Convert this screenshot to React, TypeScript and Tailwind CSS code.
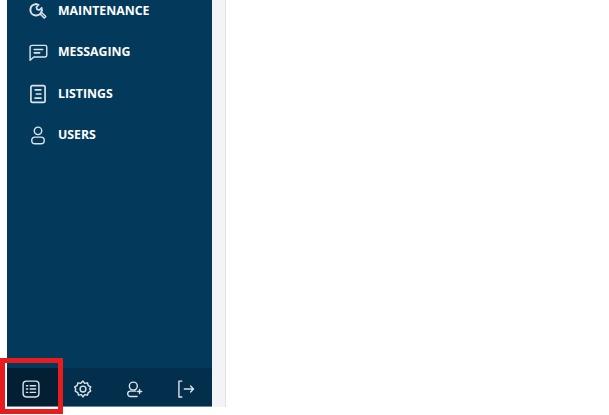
const font = { fontFamily: '"Open Sans", sans-serif' };

function Icon({ children, size = 20 }: { children: React.ReactNode; size?: number }) {
  return (
    <svg width={size} height={size} viewBox="0 0 24 24" fill="none" stroke="#dbe4ea" strokeWidth="1.7" strokeLinecap="round" strokeLinejoin="round" className="shrink-0">
      {children}
    </svg>
  );
}

const items = [
  {
    label: 'MAINTENANCE',
    icon: (
      <>
        <path d="M9.500 3.800A6.800 6.800 0 1 0 16.400 11.500" strokeWidth="2.400" />
        <path d="M9.500 3.800L12.800 4.500 10 7.500l.9 2.600 2.700.7 2.800-2.700.3 3" strokeWidth="2" />
        <path d="M14.500 15.500l5 5 1.800-1.800-5-5" strokeWidth="1.800" />
      </>
    ),
  },
  {
    label: 'MESSAGING',
    icon: (
      <>
        <path d="M5 4h15.500a2 2 0 0 1 2 2v10a2 2 0 0 1-2 2H7L2.500 22V6.500A2.500 2.500 0 0 1 5 4z" />
        <path d="M7.500 9h10M7.500 13h6.500" strokeWidth="2" />
      </>
    ),
  },
  {
    label: 'LISTINGS',
    icon: (
      <>
        <rect x="3.500" y="2" width="17" height="20" rx="2" strokeWidth="2" />
        <path d="M8.500 7h7M10 12h5.500M8.500 17h7" strokeWidth="2" />
      </>
    ),
  },
  {
    label: 'USERS',
    icon: (
      <>
        <circle cx="12" cy="7" r="4.500" />
        <rect x="4.500" y="14.500" width="15" height="8" rx="4" />
      </>
    ),
  },
];

export default function App() {
  return (
    <div className="relative h-[415px] w-[609px] overflow-hidden bg-white" style={font}>
      <div className="flex h-[407px]">
        <aside className="ml-[7px] flex w-[205px] flex-col overflow-hidden bg-[#033a5c]">
          <nav className="-mt-[10px] flex flex-1 flex-col">
            {items.map((item) => (
              <div key={item.label} className="flex h-[41.500px] items-center gap-[10px] pl-[21px]">
                <Icon>{item.icon}</Icon>
                <span className="text-[12.300px] font-bold text-white">{item.label}</span>
              </div>
            ))}
          </nav>
          <div className="flex h-[39px] border-b border-[#6d8797] bg-[#032f4c] pt-[3px]">
            <div className="-mt-[3px] flex w-[55px] items-center bg-[#021f33] pl-[14px] pt-[3px]">
              <Icon>
                <rect x="2.500" y="2.500" width="19" height="19" rx="4" />
                <path d="M6.500 8h1.500M11 8h6.500M6.500 12h1.500M11 12h6.500M6.500 16h1.500M11 16h6.500" />
              </Icon>
            </div>
            <div className="flex items-center gap-[31.500px] pl-[11px]">
              <Icon>
                <path d="M12 2.500l2 2.700 3.300-.6 1 3.200 3 1.600-1.300 2.600 1.300 2.600-3 1.600-1 3.200-3.300-.6-2 2.700-2-2.700-3.300.6-1-3.200-3-1.600L3.300 12 2 9.400l3-1.600 1-3.200 3.300.6z" />
                <circle cx="12" cy="12" r="3.500" />
              </Icon>
              <Icon>
                <circle cx="10" cy="8.500" r="4.800" />
                <path d="M13 14.500H6.500a3.200 3.200 0 0 0 0 6.500h8M17.500 12.500v5M15 15h5" />
              </Icon>
              <Icon>
                <path d="M7 2.500H3.500v19H7M10 12h11M17.500 8.500L21 12l-3.500 3.500" />
              </Icon>
            </div>
          </div>
        </aside>
        <div className="w-[14px] border-r border-[#dfe1e6] bg-[#f3f4f8]" />
        <main className="flex-1 bg-white" />
      </div>
      <div className="absolute left-0 top-[358px] h-[56px] w-[63px] border-[5px] border-[#e81c1c]" />
    </div>
  );
}
